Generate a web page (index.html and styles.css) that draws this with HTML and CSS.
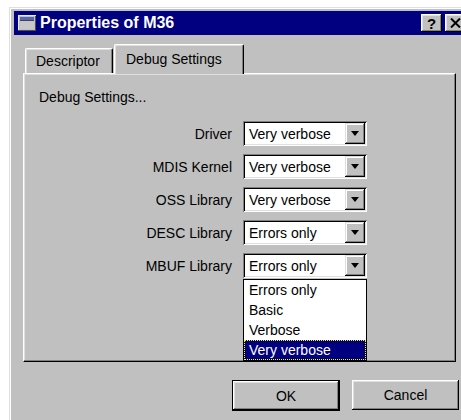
FILE: index.html
```html
<!DOCTYPE html>
<html lang="en">
<head>
<meta charset="utf-8">
<title>Properties of M36</title>
<link rel="stylesheet" href="styles.css">
</head>
<body>
<div class="window">
  <div class="titlebar">
    <svg class="title-icon" width="18" height="16" viewBox="0 0 18 16" aria-hidden="true">
      <rect x="0" y="0" width="18" height="16" fill="#c0c0c0"/>
      <path d="M0 0H18V1H1V16H0Z" fill="#e8e8e8"/>
      <path d="M17 1H18V16H0V15H17Z" fill="#505050"/>
      <rect x="2" y="2" width="14" height="3" fill="#5868a8"/>
      <rect x="2" y="5" width="14" height="1" fill="#404060"/>
      <rect x="2" y="6" width="14" height="8" fill="#c8c8c8"/>
    </svg>
    <span class="title-text">Properties of M36</span>
    <div class="caption-buttons">
      <button class="cap-btn help" type="button">?</button>
      <button class="cap-btn close" type="button" aria-label="Close">
        <svg width="11" height="10" viewBox="0 0 11 10" aria-hidden="true">
          <path d="M1 0.5L10 9.5M10 0.5L1 9.5" stroke="#000" stroke-width="2" fill="none"/>
        </svg>
      </button>
    </div>
  </div>

  <div class="sheet">
    <div class="tabs">
      <div class="tab">Descriptor</div>
      <div class="tab active">Debug Settings</div>
    </div>
    <div class="panel">
      <div class="caption">Debug Settings...</div>
      <div class="form">
        <label class="field-label">Driver</label>
        <div class="combo"><span class="combo-value">Very verbose</span><span class="combo-arrow"><i></i></span></div>

        <label class="field-label">MDIS Kernel</label>
        <div class="combo"><span class="combo-value">Very verbose</span><span class="combo-arrow"><i></i></span></div>

        <label class="field-label">OSS Library</label>
        <div class="combo"><span class="combo-value">Very verbose</span><span class="combo-arrow"><i></i></span></div>

        <label class="field-label">DESC Library</label>
        <div class="combo"><span class="combo-value">Errors only</span><span class="combo-arrow"><i></i></span></div>

        <label class="field-label">MBUF Library</label>
        <div class="combo open"><span class="combo-value">Errors only</span><span class="combo-arrow"><i></i></span>
          <ul class="combo-list">
            <li>Errors only</li>
            <li>Basic</li>
            <li>Verbose</li>
            <li class="selected">Very verbose</li>
          </ul>
        </div>
      </div>
    </div>
  </div>

  <div class="actions">
    <button class="btn default" type="button">OK</button>
    <button class="btn" type="button">Cancel</button>
  </div>
</div>
</body>
</html>
```

FILE: styles.css
```css
html, body {
  margin: 0;
  overflow: hidden;
  background: #fff;
}

body {
  font-family: "Liberation Sans", Arial, sans-serif;
  font-size: 14px;
  color: #000;
}

/* Dialog frame */
.window {
  box-sizing: border-box;
  width: 464px;
  height: 440px;
  margin: 7px 0 0 9px;
  padding: 4px 5px;
  background: #c0c0c0;
  box-shadow: inset 1px 1px #dfdfdf, inset -1px -1px #000,
              inset 2px 2px #fff, inset -2px -2px #808080;
}

/* Caption bar */
.titlebar {
  display: flex;
  align-items: center;
  height: 24px;
  padding: 0 2px 0 4px;
  background: #000080;
}

.title-icon {
  display: block;
  flex: none;
}

.title-text {
  margin-left: 4px;
  color: #fff;
  font-weight: bold;
  font-size: 16px;
  line-height: 18px;
}

.caption-buttons {
  display: flex;
  gap: 3px;
  margin-left: auto;
}

.cap-btn {
  display: flex;
  align-items: center;
  justify-content: center;
  width: 21px;
  height: 18px;
  padding: 0;
  border: 0;
  background: #c0c0c0;
  font-family: "Liberation Sans", Arial, sans-serif;
  font-weight: bold;
  font-size: 15px;
  line-height: 1;
  color: #000;
  box-shadow: inset -1px -1px #000, inset 1px 1px #fff,
              inset -2px -2px #808080, inset 2px 2px #dfdfdf;
}

/* Property sheet */
.sheet {
  margin: 9px 0 0 9px;
}

.tabs {
  display: flex;
  align-items: flex-end;
  height: 29px;
  padding-left: 2px;
}

.tab {
  box-sizing: border-box;
  height: 25px;
  width: 88px;
  padding: 4px 0 0 10px;
  line-height: 16px;
  background: #c0c0c0;
  border-top: 1px solid #fff;
  border-left: 1px solid #fff;
  border-right: 1px solid #000;
  border-radius: 2px 2px 0 0;
  box-shadow: inset -1px 0 #808080, inset 1px 1px #dfdfdf;
}

.tab.active {
  position: relative;
  z-index: 1;
  width: 130px;
  height: 30px;
  margin: 0 0 -1px 1px;
  padding: 6px 0 0 11px;
}

.panel {
  box-sizing: border-box;
  width: 433px;
  height: 289px;
  padding-top: 15px;
  border-top: 1px solid #fff;
  border-left: 1px solid #fff;
  border-right: 1px solid #000;
  border-bottom: 1px solid #000;
  box-shadow: inset -1px -1px #808080, inset 1px 1px #dfdfdf;
}

.caption {
  padding-left: 15px;
  line-height: 16px;
}

.form {
  display: grid;
  grid-template-columns: 208px 124px;
  grid-auto-rows: 25px;
  column-gap: 11px;
  row-gap: 8px;
  margin-top: 16px;
}

.field-label {
  align-self: center;
  text-align: right;
  line-height: 16px;
  white-space: nowrap;
}

/* Drop-down combo */
.combo {
  position: relative;
  box-sizing: border-box;
  display: flex;
  align-items: center;
  height: 25px;
  padding-left: 6px;
  background: #fff;
  box-shadow: inset 1px 1px #808080, inset -1px -1px #fff,
              inset 2px 2px #000, inset -2px -2px #dfdfdf;
}

.combo-value {
  line-height: 16px;
  white-space: nowrap;
}

.combo-arrow {
  box-sizing: border-box;
  display: flex;
  align-items: center;
  justify-content: center;
  width: 20px;
  height: 21px;
  margin: 0 2px 0 auto;
  background: #c0c0c0;
  box-shadow: inset -1px -1px #000, inset 1px 1px #dfdfdf,
              inset -2px -2px #808080, inset 2px 2px #fff;
}

.combo-arrow i {
  display: block;
  width: 0;
  height: 0;
  border-left: 4.5px solid transparent;
  border-right: 4.5px solid transparent;
  border-top: 5px solid #000;
}

.combo-list {
  position: absolute;
  top: calc(100% + 1px);
  left: 0;
  z-index: 2;
  box-sizing: border-box;
  width: 124px;
  margin: 0;
  padding: 0;
  list-style: none;
  background: #fff;
  border: 1px solid #000;
}

.combo-list li {
  height: 20px;
  padding-left: 5px;
  line-height: 20px;
  white-space: nowrap;
}

.combo-list li.selected {
  background: #000080;
  color: #fff;
  outline: 1px dotted #ffff00;
  outline-offset: -1px;
}

/* Dialog buttons */
.actions {
  display: flex;
  justify-content: flex-end;
  align-items: flex-start;
  gap: 12px;
  margin-top: 18px;
  padding-right: 9px;
}

.btn {
  box-sizing: border-box;
  width: 107px;
  height: 30px;
  padding: 0;
  border: 0;
  background: #c0c0c0;
  font-family: "Liberation Sans", Arial, sans-serif;
  font-size: 14px;
  color: #000;
  box-shadow: inset -1px -1px #000, inset 1px 1px #fff,
              inset -2px -2px #808080, inset 2px 2px #dfdfdf;
}

.btn.default {
  width: 108px;
  height: 31px;
  border: 1px solid #000;
}
```
